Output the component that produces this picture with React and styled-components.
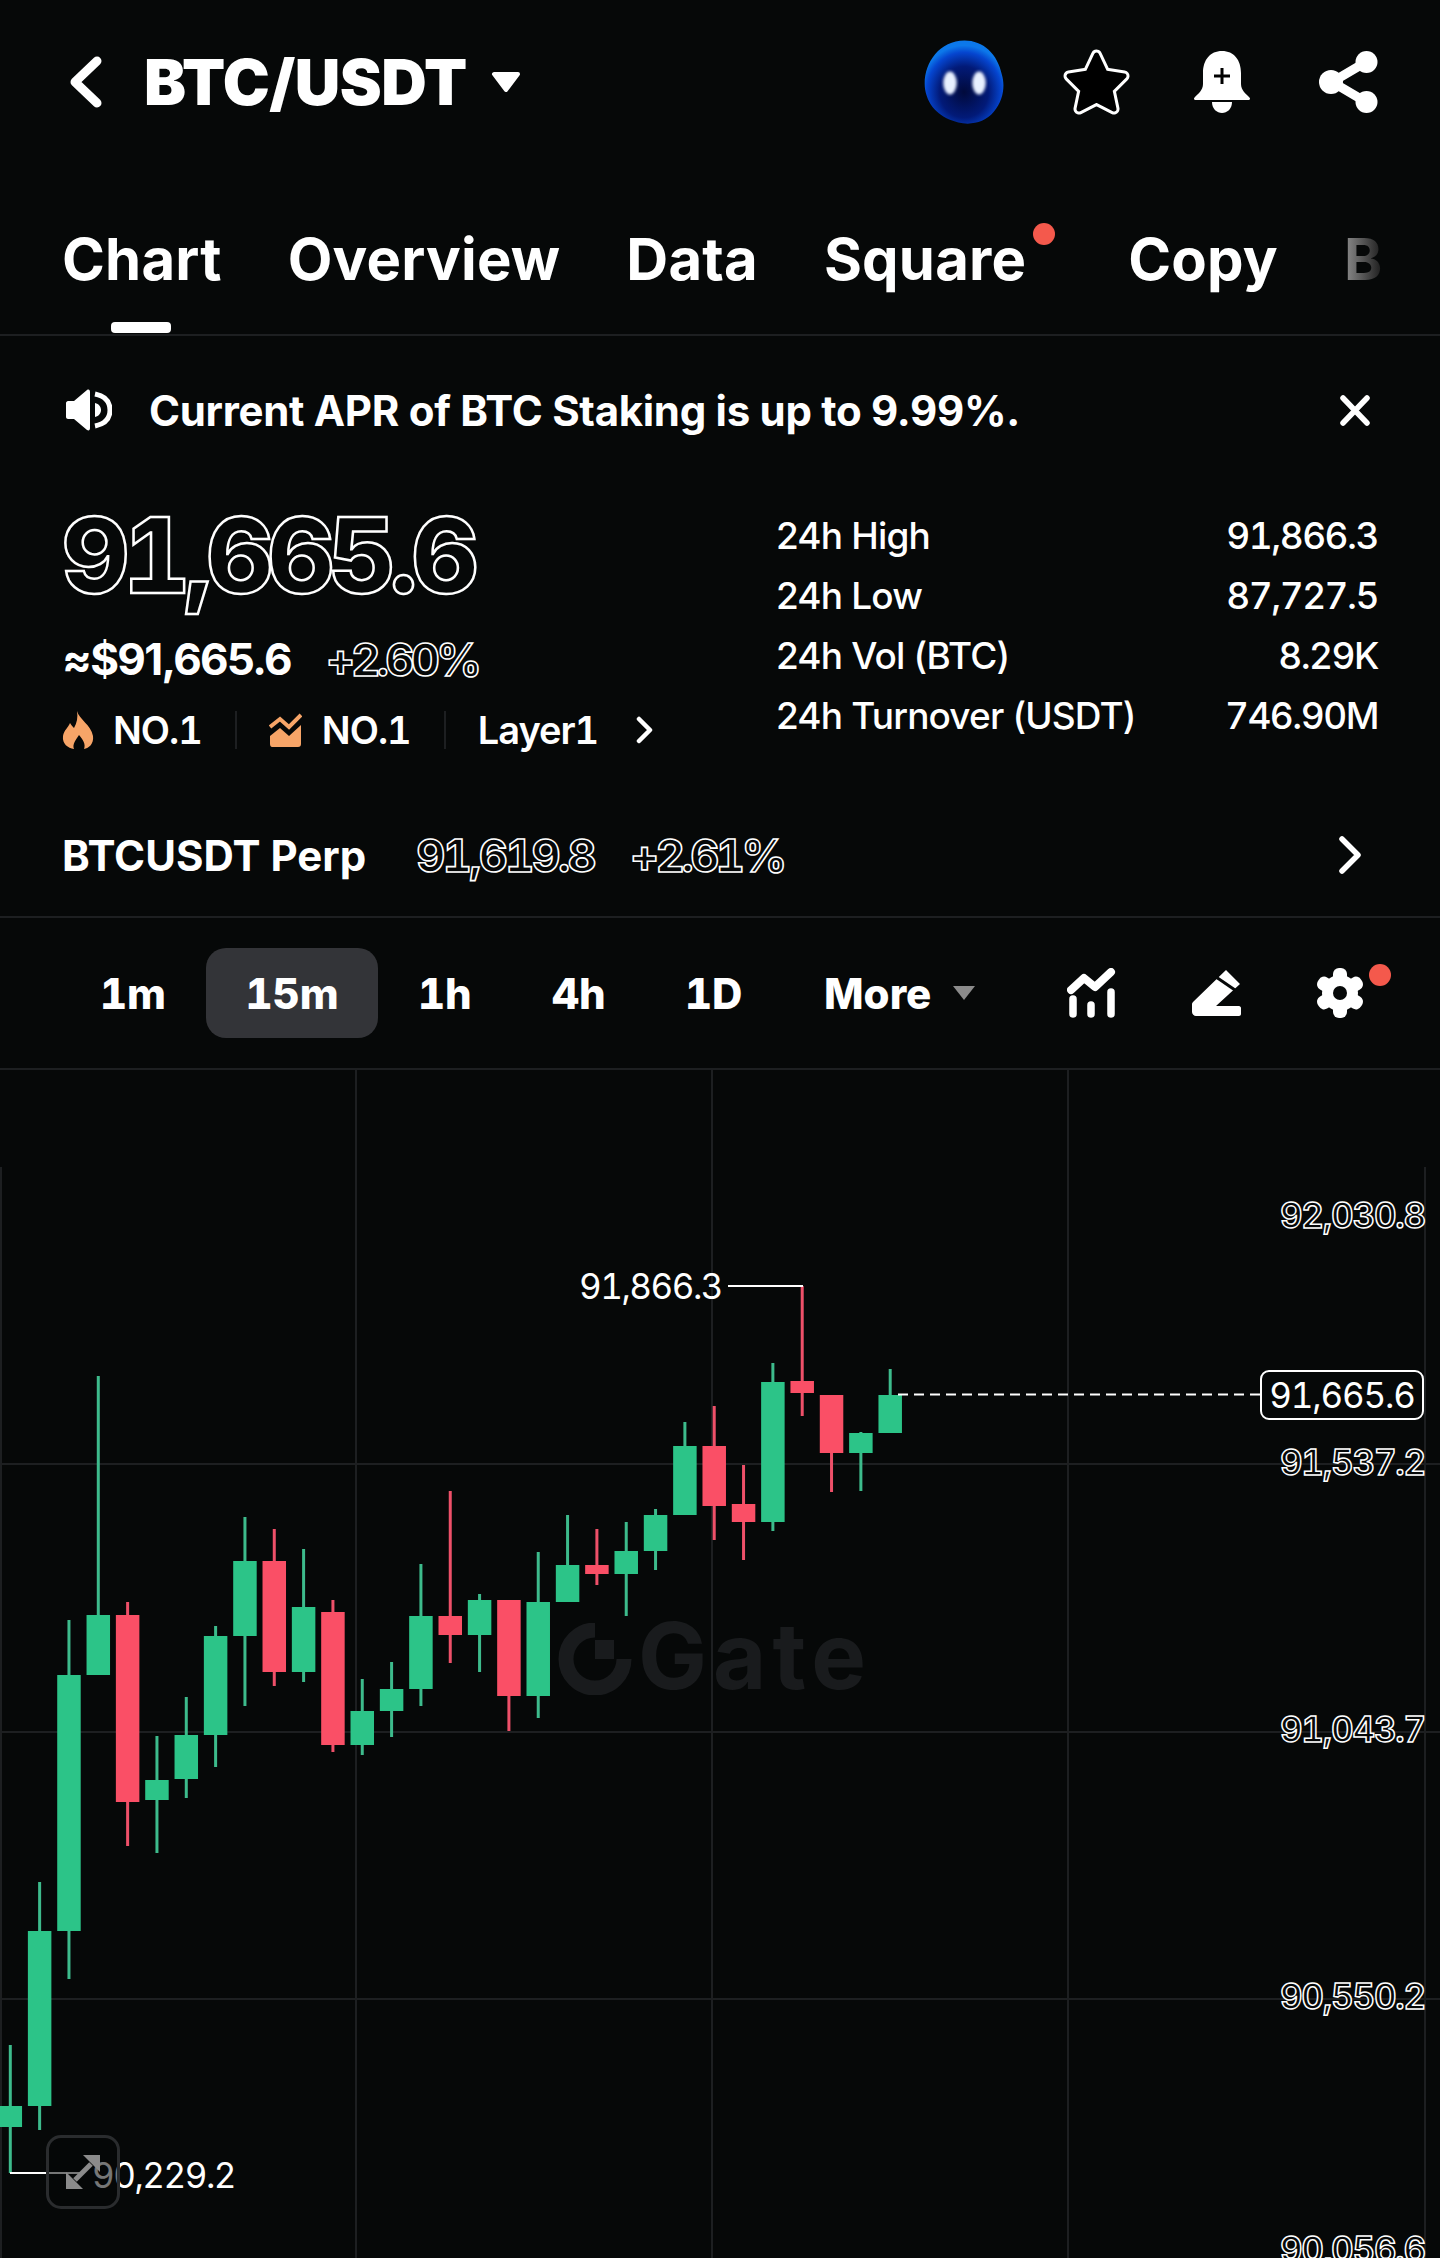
import React from "react";
import styled, { createGlobalStyle, css } from "styled-components";

const BG = "#060808";
const LINE = "#1d1f21";
const GREEN = "#2cc488";
const RED = "#fa4f66";
const ORANGE = "#f7a568";

const GlobalStyle = createGlobalStyle`
  html, body {
    margin: 0;
    padding: 0;
    background: ${BG};
    overflow: hidden;
  }
  #root {
    width: 1440px;
    height: 2258px;
    overflow: hidden;
  }
`;

const outline = (w) => css`
  color: ${BG};
  -webkit-text-stroke: ${w}px #fff;
  font-variant-numeric: tabular-nums;
`;

const Page = styled.div`
  width: 1440px;
  height: 2258px;
  overflow: hidden;
  background: ${BG};
  color: #fff;
  font-family: Inter, "Liberation Sans", sans-serif;
`;

const Header = styled.header`
  height: 164px;
  display: flex;
  align-items: center;
  padding: 0 62px 0 70px;
  box-sizing: border-box;
`;

const Pair = styled.h1`
  margin: 0 0 0 42px;
  font-size: 63px;
  font-weight: 900;
  letter-spacing: -0.5px;
  line-height: 1;
`;

const Icon = styled.svg`
  display: block;
  flex: none;
  margin-left: ${(p) => p.$ml || 0}px;
`;

const Spacer = styled.div`
  flex: 1;
`;

const Tabs = styled.nav`
  height: 172px;
  box-sizing: border-box;
  display: flex;
  gap: 66px;
  padding: 60px 0 0 62px;
  border-bottom: 2px solid ${LINE};
  overflow: hidden;
`;

const Tab = styled.div`
  position: relative;
  flex: none;
  font-size: 58px;
  font-weight: 700;
  letter-spacing: 0.2px;
  line-height: 70px;
  margin-right: ${(p) => (p.$dot ? 36 : 0)}px;
  ${(p) =>
    p.$active &&
    css`
      &::after {
        content: "";
        position: absolute;
        left: 49px;
        top: 98px;
        width: 60px;
        height: 11px;
        border-radius: 4px;
        background: #fff;
      }
    `}
  ${(p) =>
    p.$dot &&
    css`
      &::before {
        content: "";
        position: absolute;
        right: -29px;
        top: -1px;
        width: 22px;
        height: 22px;
        border-radius: 50%;
        background: #f4594c;
      }
    `}
  ${(p) =>
    p.$fade &&
    css`
      background: linear-gradient(90deg, #8e8e8e, #1c1c1c);
      -webkit-background-clip: text;
      background-clip: text;
      color: transparent;
    `}
`;

const Notice = styled.div`
  height: 148px;
  display: flex;
  align-items: center;
  padding: 0 70px 0 66px;
  box-sizing: border-box;
`;

const NoticeText = styled.div`
  margin-left: 37px;
  font-size: 42px;
  font-weight: 700;
  letter-spacing: -0.3px;
  flex: 1;
`;

const Summary = styled.section`
  height: 312px;
  display: flex;
  padding: 0 62px 0 62px;
  box-sizing: border-box;
`;

const PriceCol = styled.div`
  width: 714px;
  flex: none;
`;

const BigPrice = styled.div`
  margin-top: 9px;
  font-size: 104px;
  font-weight: 800;
  line-height: 124px;
  letter-spacing: -6px;
  ${outline(2.5)}
`;

const SubRow = styled.div`
  margin-top: 12px;
  display: flex;
  align-items: center;
  gap: 35px;
  height: 60px;
`;

const SubPrice = styled.span`
  font-size: 44px;
  font-weight: 700;
  letter-spacing: -1.7px;
`;

const SubChange = styled.span`
  font-size: 45px;
  font-weight: 700;
  letter-spacing: -3.6px;
  ${outline(1.6)}
`;

const BadgeRow = styled.div`
  margin-top: 19px;
  display: flex;
  align-items: center;
  height: 44px;
  font-size: 38px;
  font-weight: 600;
  font-variant-numeric: tabular-nums;
`;

const BadgeText = styled.span`
  margin-left: ${(p) => p.$ml}px;
  letter-spacing: -1px;
`;

const Divider = styled.span`
  width: 2px;
  height: 38px;
  margin: 0 32px 0 33px;
  background: ${LINE};
`;

const Stats = styled.div`
  flex: 1;
  padding-top: 21px;
`;

const StatRow = styled.div`
  height: 60px;
  display: flex;
  justify-content: space-between;
  align-items: center;
  font-size: 37px;
  font-weight: 500;
  letter-spacing: -0.85px;
`;

const StatValue = styled.span`
  letter-spacing: -1.5px;
  font-variant-numeric: tabular-nums;
`;

const PerpRow = styled.div`
  height: 122px;
  box-sizing: border-box;
  display: flex;
  align-items: center;
  padding: 0 78px 2px 62px;
  border-bottom: 2px solid ${LINE};
`;

const PerpName = styled.span`
  font-size: 42px;
  font-weight: 700;
  letter-spacing: 0;
`;

const PerpValue = styled.span`
  margin-left: ${(p) => p.$ml}px;
  font-size: 45px;
  font-weight: 700;
  letter-spacing: ${(p) => p.$ls}px;
  ${outline(1.6)}
`;

const Toolbar = styled.div`
  height: 152px;
  box-sizing: border-box;
  display: flex;
  align-items: center;
  padding: 0 49px 0 100px;
  border-bottom: 2px solid ${LINE};
`;

const Interval = styled.div`
  flex: none;
  width: ${(p) => p.$w}px;
  height: 90px;
  margin-left: ${(p) => p.$ml || 0}px;
  display: flex;
  align-items: center;
  justify-content: ${(p) => (p.$active ? "center" : "flex-start")};
  font-size: 42px;
  font-weight: 800;
  font-variant-numeric: tabular-nums;
  border-radius: 20px;
  background: ${(p) => (p.$active ? "#333438" : "transparent")};
`;

const Caret = styled.span`
  width: 0;
  height: 0;
  margin-left: 22px;
  border-left: 11px solid transparent;
  border-right: 11px solid transparent;
  border-top: 14px solid #8b8b8b;
`;

const ToolIcon = styled.div`
  position: relative;
  flex: none;
  margin-left: ${(p) => p.$ml}px;
`;

const RedDot = styled.span`
  position: absolute;
  right: -28px;
  top: -4px;
  width: 22px;
  height: 22px;
  border-radius: 50%;
  background: #f4594c;
`;

const Chart = styled.div`
  position: relative;
  height: 1188px;
  overflow: hidden;
`;

const ChartSvg = styled.svg`
  position: absolute;
  left: 0;
  top: 0;
`;

const Watermark = styled.div`
  position: absolute;
  left: 558px;
  top: 550px;
  display: flex;
  align-items: center;
  gap: 6px;
  color: #191b1d;
  font-size: 92px;
  font-weight: 700;
  letter-spacing: 6px;
  line-height: 72px;
`;

const WatermarkWord = styled.span`
  margin-bottom: 6px;
`;

const AxisLabel = styled.div`
  position: absolute;
  right: 15px;
  top: ${(p) => p.$y - 1070 - 22}px;
  font-size: 35px;
  font-weight: 600;
  line-height: 44px;
  letter-spacing: -1.2px;
  ${outline(1.5)}
`;

const PriceTag = styled.div`
  position: absolute;
  left: 1260px;
  top: 300px;
  width: 164px;
  height: 50px;
  box-sizing: border-box;
  border: 2px solid #fff;
  border-radius: 9px;
  background: ${BG};
  display: flex;
  align-items: center;
  justify-content: center;
  font-size: 35px;
  letter-spacing: -1.2px;
  font-variant-numeric: tabular-nums;
`;

const ExtremeLabel = styled.div`
  position: absolute;
  left: ${(p) => p.$x}px;
  top: ${(p) => p.$y - 1070 - 22}px;
  font-size: 35px;
  line-height: 44px;
  letter-spacing: -1.5px;
  font-variant-numeric: tabular-nums;
`;

const ExpandButton = styled.div`
  position: absolute;
  left: 46px;
  top: 1065px;
  width: 74px;
  height: 74px;
  box-sizing: border-box;
  border: 3px solid #2a2c2e;
  border-radius: 15px;
  background: rgba(6, 8, 8, 0.55);
`;

// [rising, high, bodyTop, bodyBottom, low] in page pixels
const candles = [
  [1, 2045, 2106, 2127, 2173],
  [1, 1882, 1931, 2106, 2130],
  [1, 1620, 1675, 1931, 1979],
  [1, 1376, 1615, 1675, 1675],
  [0, 1602, 1615, 1802, 1846],
  [1, 1736, 1780, 1800, 1853],
  [1, 1697, 1735, 1779, 1798],
  [1, 1626, 1636, 1735, 1767],
  [1, 1517, 1561, 1636, 1706],
  [0, 1529, 1561, 1672, 1686],
  [1, 1549, 1607, 1672, 1682],
  [0, 1600, 1612, 1745, 1752],
  [1, 1679, 1711, 1745, 1755],
  [1, 1662, 1689, 1711, 1737],
  [1, 1564, 1616, 1689, 1706],
  [0, 1491, 1616, 1635, 1663],
  [1, 1594, 1600, 1635, 1672],
  [0, 1600, 1600, 1696, 1731],
  [1, 1552, 1602, 1696, 1718],
  [1, 1515, 1565, 1602, 1602],
  [0, 1529, 1565, 1574, 1585],
  [1, 1522, 1551, 1574, 1616],
  [1, 1509, 1515, 1551, 1570],
  [1, 1422, 1446, 1515, 1515],
  [0, 1406, 1446, 1506, 1540],
  [0, 1465, 1504, 1522, 1560],
  [1, 1363, 1382, 1522, 1531],
  [0, 1286, 1381, 1393, 1416],
  [0, 1395, 1395, 1453, 1492],
  [1, 1432, 1433, 1453, 1491],
  [1, 1369, 1395, 1433, 1433],
];

const stats = [
  ["24h High", "91,866.3"],
  ["24h Low", "87,727.5"],
  ["24h Vol (BTC)", "8.29K"],
  ["24h Turnover (USDT)", "746.90M"],
];

const STAR = "34.5,7 43,25 62,28 48,42 52,61 34.5,52 17,61 21,42 7,28 26,25";

function Avatar() {
  return (
    <Icon width="82" height="86" viewBox="0 0 79 82" $ml={0}>
      <defs>
        <radialGradient id="blob" cx="50%" cy="62%" r="56%">
          <stop offset="0%" stopColor="#010a3c" />
          <stop offset="55%" stopColor="#021a78" />
          <stop offset="85%" stopColor="#0545cf" />
          <stop offset="100%" stopColor="#0c78ea" />
        </radialGradient>
        <filter id="soft">
          <feGaussianBlur stdDeviation="1.4" />
        </filter>
      </defs>
      <path
        d="M40 1C58 1 72 14 76 34C79 44 78 58 68 70C60 80 46 83 34 80C18 76 5 66 2 48C-1 26 14 1 40 1Z"
        fill="url(#blob)"
      />
      <ellipse cx="26" cy="42" rx="6.5" ry="11" fill="#e8f0ff" filter="url(#soft)" />
      <ellipse cx="54" cy="42" rx="6.5" ry="11" fill="#e8f0ff" filter="url(#soft)" />
    </Icon>
  );
}

export default function App() {
  return (
    <Page>
      <GlobalStyle />
      <Header>
        <Icon width="32" height="52" viewBox="0 0 32 52">
          <path d="M27 5L5 26L27 47" fill="none" stroke="#fff" strokeWidth="9" strokeLinecap="round" strokeLinejoin="round" />
        </Icon>
        <Pair>BTC/USDT</Pair>
        <Icon width="30" height="22" viewBox="0 0 30 22" $ml={24}>
          <path d="M3 3H27L15 19Z" fill="#fff" stroke="#fff" strokeWidth="4" strokeLinejoin="round" />
        </Icon>
        <Spacer />
        <Avatar />
        <Icon width="69" height="68" viewBox="0 0 69 68" $ml={57}>
          <polygon points={STAR} fill="#fff" stroke="#fff" strokeWidth="11" strokeLinejoin="round" />
          <polygon points={STAR} fill="#000" stroke="#000" strokeWidth="5" strokeLinejoin="round" />
        </Icon>
        <Icon width="56" height="62" viewBox="0 0 56 62" $ml={63}>
          <path d="M28 0C40 0 47 9 47 22V33C47 39 52 43 55 46C57 48 56 49 54 49H2C0 49 -1 48 1 46C4 43 9 39 9 33V22C9 9 16 0 28 0Z" fill="#fff" />
          <path d="M18 51H38C38 58 33 62 28 62C23 62 18 58 18 51Z" fill="#fff" />
          <path d="M20 25H36M28 17V33" stroke="#000" strokeWidth="3" />
        </Icon>
        <Icon width="59" height="62" viewBox="0 0 59 62" $ml={69}>
          <path d="M47 11L13 31L47 51" fill="none" stroke="#fff" strokeWidth="9" />
          <circle cx="12" cy="31" r="12" fill="#fff" />
          <circle cx="47.5" cy="11" r="11" fill="#fff" />
          <circle cx="47.5" cy="51" r="11" fill="#fff" />
        </Icon>
      </Header>

      <Tabs>
        <Tab $active>Chart</Tab>
        <Tab>Overview</Tab>
        <Tab>Data</Tab>
        <Tab $dot>Square</Tab>
        <Tab>Copy</Tab>
        <Tab $fade>B</Tab>
      </Tabs>

      <Notice>
        <Icon width="46" height="42" viewBox="0 0 46 42">
          <path d="M0 14C0 13 1 12 2 12H8L21 1C23 0 24 1 24 3V39C24 41 23 42 21 41L8 30H2C1 30 0 29 0 28Z" fill="#fff" />
          <path d="M29 5C39 7 44 13 44 21C44 29 39 35 29 37" fill="none" stroke="#fff" strokeWidth="5" />
          <path d="M29 14C33 15 35 18 35 21C35 24 33 27 29 28Z" fill="#fff" />
        </Icon>
        <NoticeText>Current APR of BTC Staking is up to 9.99%.</NoticeText>
        <Icon width="30" height="31" viewBox="0 0 30 31">
          <path d="M3 3L27 28M27 3L3 28" stroke="#fff" strokeWidth="5.5" strokeLinecap="round" />
        </Icon>
      </Notice>

      <Summary>
        <PriceCol>
          <BigPrice>91,665.6</BigPrice>
          <SubRow>
            <SubPrice>≈$91,665.6</SubPrice>
            <SubChange>+2.60%</SubChange>
          </SubRow>
          <BadgeRow>
            <Icon width="32" height="38" viewBox="0 0 32 38">
              <path d="M15 0C17 8 29 14 31 25C32 33 27 37 22 38C24 33 21 29 17 24C14 29 10 33 12 38C6 37 0 33 1 25C2 19 6 17 8 12C10 15 11 16 12 17C15 12 16 6 15 0Z" fill={ORANGE} />
            </Icon>
            <BadgeText $ml={19}>NO.1</BadgeText>
            <Divider />
            <Icon width="33" height="34" viewBox="0 0 33 34">
              <path d="M1 23L11 15L20 23L32 12V31C32 33 31 34 29 34H3C2 34 1 33 1 31Z" fill={ORANGE} />
              <path d="M1 14L11 6L20 14L32 2" fill="none" stroke={ORANGE} strokeWidth="4" />
            </Icon>
            <BadgeText $ml={20}>NO.1</BadgeText>
            <Divider />
            <BadgeText $ml={0}>Layer1</BadgeText>
            <Icon width="20" height="28" viewBox="0 0 20 28" $ml={37}>
              <path d="M4 3L15 14L4 25" fill="none" stroke="#fff" strokeWidth="4.5" strokeLinecap="round" strokeLinejoin="round" />
            </Icon>
          </BadgeRow>
        </PriceCol>
        <Stats>
          {stats.map(([label, value]) => (
            <StatRow key={label}>
              <span>{label}</span>
              <StatValue>{value}</StatValue>
            </StatRow>
          ))}
        </Stats>
      </Summary>

      <PerpRow>
        <PerpName>BTCUSDT Perp</PerpName>
        <PerpValue $ml={50} $ls={-2.6}>91,619.8</PerpValue>
        <PerpValue $ml={36} $ls={-3.4}>+2.61%</PerpValue>
        <Spacer />
        <Icon width="24" height="38" viewBox="0 0 24 38">
          <path d="M4 3L20 19L4 35" fill="none" stroke="#fff" strokeWidth="5.5" strokeLinecap="round" strokeLinejoin="round" />
        </Icon>
      </PerpRow>

      <Toolbar>
        <Interval $w={65}>1m</Interval>
        <Interval $w={172} $ml={41} $active>15m</Interval>
        <Interval $w={60} $ml={40}>1h</Interval>
        <Interval $w={60} $ml={74}>4h</Interval>
        <Interval $w={60} $ml={73}>1D</Interval>
        <Interval $w={129} $ml={79}>
          More
          <Caret />
        </Interval>
        <ToolIcon $ml={114}>
          <Icon width="50" height="50" viewBox="0 0 50 50">
            <path d="M4 22L17 10L28 19L44 4" fill="none" stroke="#fff" strokeWidth="8" strokeLinecap="round" strokeLinejoin="round" />
            <path d="M6 31V46M24 37V46M44 24V46" stroke="#fff" strokeWidth="7.5" strokeLinecap="round" />
          </Icon>
        </ToolIcon>
        <ToolIcon $ml={75}>
          <Icon width="50" height="46" viewBox="0 0 50 46">
            <path d="M34 0L48 14L24 36H47C48 36 49 37 49 38V44C49 45 48 46 47 46H4C2 46 0 44 0 42V34C0 33 1 32 2 31Z" fill="#fff" />
            <path d="M24 7L43 20" stroke={BG} strokeWidth="3" />
          </Icon>
        </ToolIcon>
        <ToolIcon $ml={75}>
          <Icon width="46" height="50" viewBox="0 0 46 50">
            <g fill="#fff">
              <rect x="16" y="0" width="14" height="50" rx="6" />
              <rect x="16" y="0" width="14" height="50" rx="6" transform="rotate(60 23 25)" />
              <rect x="16" y="0" width="14" height="50" rx="6" transform="rotate(120 23 25)" />
              <circle cx="23" cy="25" r="18" />
            </g>
            <circle cx="23" cy="25" r="7" fill={BG} />
          </Icon>
          <RedDot />
        </ToolIcon>
      </Toolbar>

      <Chart>
        <Watermark>
          <Icon width="74" height="72" viewBox="0 0 74 72">
            <path d="M37 7A29 29 0 1 0 66 36" fill="none" stroke="#191b1d" strokeWidth="15" />
            <rect x="37" y="17" width="19" height="19" fill="#191b1d" />
          </Icon>
          <WatermarkWord>Gate</WatermarkWord>
        </Watermark>
        <ChartSvg width="1440" height="1188" viewBox="0 1070 1440 1188">
          <g stroke={LINE} strokeWidth="2">
            <path d="M356 1070V2258M712 1070V2258M1068 1070V2258" />
            <path d="M1 1167V2258M1425 1167V2258" />
            <path d="M0 1464H1440M0 1732H1440M0 1999H1440" />
          </g>
          {candles.map(([up, high, top, bottom, low], i) => {
            const x = 10.3 + 29.33 * i;
            return (
              <g key={i}>
                <rect x={x - 1.5} y={high} width="3" height={low - high} fill={up ? "#3dbb8c" : "#ee5069"} />
                <rect x={x - 11.75} y={top} width="23.5" height={bottom - top} fill={up ? GREEN : RED} />
              </g>
            );
          })}
          <path d="M728 1286H803" stroke="#fff" strokeWidth="2" />
          <path d="M10 2173H82" stroke="#fff" strokeWidth="2" />
          <path d="M898 1394.5H1260" stroke="#fff" strokeWidth="2" strokeDasharray="10 6" />
        </ChartSvg>
        <AxisLabel $y={1215}>92,030.8</AxisLabel>
        <AxisLabel $y={1462}>91,537.2</AxisLabel>
        <AxisLabel $y={1729}>91,043.7</AxisLabel>
        <AxisLabel $y={1996}>90,550.2</AxisLabel>
        <AxisLabel $y={2249}>90,056.6</AxisLabel>
        <PriceTag>91,665.6</PriceTag>
        <ExtremeLabel $x={579} $y={1286}>91,866.3</ExtremeLabel>
        <ExtremeLabel $x={92} $y={2175}>90,229.2</ExtremeLabel>
        <ExpandButton>
          <Icon width="68" height="68" viewBox="0 0 68 68">
            <path d="M34 17H51V34Z" fill="#8b8b8b" />
            <path d="M17 34V51H34Z" fill="#8b8b8b" />
            <path d="M42 26L26 42" stroke="#8b8b8b" strokeWidth="5" />
          </Icon>
        </ExpandButton>
      </Chart>
    </Page>
  );
}
